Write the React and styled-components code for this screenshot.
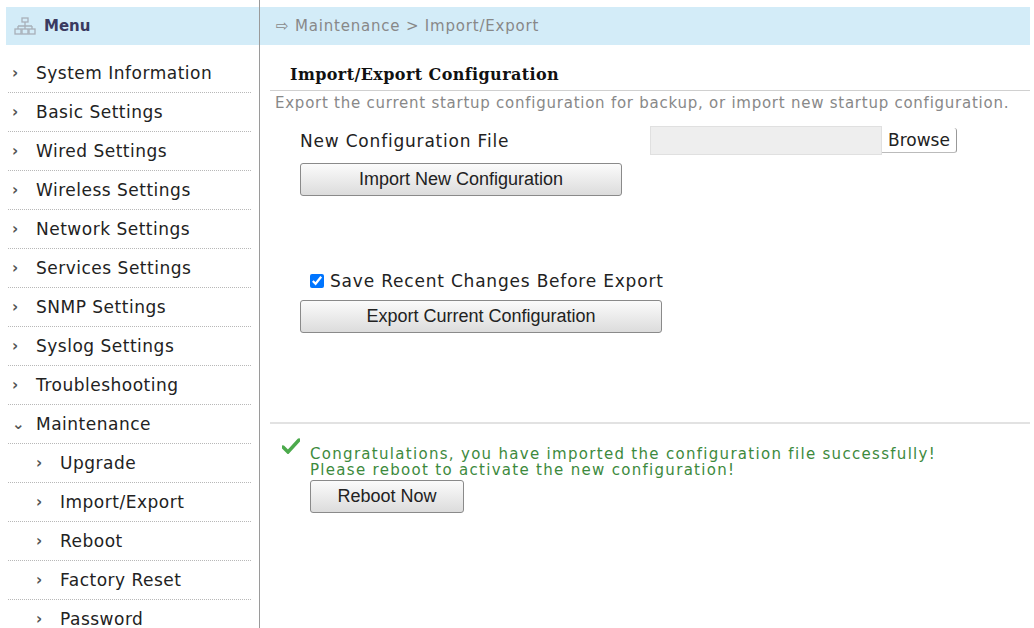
import React from 'react';
import styled, { createGlobalStyle } from 'styled-components';

const Global = createGlobalStyle`
  body { margin: 0; background: #fff; font-family: "DejaVu Sans", Verdana, sans-serif; }
`;

const Page = styled.div`
  display: flex;
  width: 1034px;
  height: 628px;
  overflow: hidden;
  padding-top: 7px;
  box-sizing: border-box;
`;

const Side = styled.div`
  width: 253px;
  margin-left: 6px;
  border-right: 1px solid #9a9a9a;
  margin-top: -7px;
  padding-top: 7px;
`;

const Bar = styled.div`
  height: 38px;
  background: #d3ecf8;
  display: flex;
  align-items: center;
  gap: 8px;
  padding-left: ${(p) => p.$pad || 8}px;
  font-size: 15px;
  letter-spacing: ${(p) => p.$ls || 0}px;
  color: ${(p) => p.$color || '#333'};
`;

const MenuLabel = styled.span`
  font-weight: bold;
  color: #3a3a60;
  font-size: 15px;
`;

const List = styled.div`
  padding-top: 9px;
`;

const Item = styled.div`
  height: 38px;
  margin: 0 8px 0 2px;
  border-bottom: 1px dotted #b8b8b8;
  display: flex;
  align-items: center;
  padding-left: ${(p) => (p.$sub ? 28 : 4)}px;
  font-size: 17px;
  letter-spacing: 0.5px;
  color: #222;
  gap: 14px;
`;

const Chev = styled.span`
  color: #555;
  font-size: 15px;
  font-weight: bold;
  width: 10px;
`;

const Main = styled.div`
  flex: 1;
  margin-right: 4px;
`;

const Content = styled.div`
  padding: 20px 0 0 10px;
`;

const Title = styled.div`
  font-family: "DejaVu Serif", serif;
  font-weight: bold;
  font-size: 16px;
  letter-spacing: 0.4px;
  color: #111;
  padding-left: 20px;
  padding-bottom: 6px;
  border-bottom: 1px solid #d0d0d0;
`;

const Desc = styled.div`
  font-size: 15px;
  letter-spacing: 0.75px;
  color: #888;
  padding: 3px 0 0 5px;
  white-space: nowrap;
`;

const Form = styled.div`
  padding-left: 30px;
`;

const Row = styled.div`
  display: flex;
  align-items: center;
  margin-top: ${(p) => p.$top || 0}px;
  font-size: 17px;
  letter-spacing: 0.8px;
  color: #222;
`;

const FileLabel = styled.span`
  width: 350px;
`;

const FileBox = styled.div`
  width: 230px;
  height: 27px;
  background: #eee;
  border: 1px solid #e0e0e0;
`;

const Browse = styled.div`
  font-size: 17px;
  letter-spacing: 0;
  padding: 2px 6px;
  border-right: 1px solid #999;
  border-bottom: 1px solid #bbb;
  border-radius: 0 3px 3px 0;
`;

const Btn = styled.button`
  width: ${(p) => p.$w}px;
  height: 33px;
  font-family: "Liberation Sans", Arial, sans-serif;
  font-size: 18px;
  color: #222;
  background: linear-gradient(#fbfbfb, #dcdcdc);
  border: 1px solid #8a8a8a;
  border-radius: 3px;
  margin-top: ${(p) => p.$top || 0}px;
`;

const Check = styled.input`
  margin: 0 6px 0 10px;
  width: 14px;
  height: 14px;
`;

const Result = styled.div`
  margin-top: 89px;
  border-top: 2px solid #e2e2e2;
  padding: 14px 0 0 12px;
  display: flex;
  gap: 10px;
`;

const Msg = styled.div`
  color: #3d8a3d;
  font-size: 15px;
  letter-spacing: 1.3px;
  line-height: 16px;
  padding-top: 8px;
`;

const top = [
  'System Information', 'Basic Settings', 'Wired Settings', 'Wireless Settings',
  'Network Settings', 'Services Settings', 'SNMP Settings', 'Syslog Settings', 'Troubleshooting',
];
const sub = ['Upgrade', 'Import/Export', 'Reboot', 'Factory Reset', 'Password'];

export default function App() {
  return (
    <Page>
      <Global />
      <Side>
        <Bar>
          <svg width="22" height="18" viewBox="0 0 22 18">
            <g fill="none" stroke="#a8b0b8" strokeWidth="1.3">
              <rect x="8" y="1" width="6" height="4" />
              <path d="M11 5v4M4 9h14M4 9v3M11 9v3M18 9v3" />
              <rect x="1" y="12" width="6" height="5" />
              <rect x="8" y="12" width="6" height="5" />
              <rect x="15" y="12" width="6" height="5" />
            </g>
          </svg>
          <MenuLabel>Menu</MenuLabel>
        </Bar>
        <List>
          {top.map((t) => (
            <Item key={t}><Chev>›</Chev>{t}</Item>
          ))}
          <Item><Chev>⌄</Chev>Maintenance</Item>
          {sub.map((t) => (
            <Item key={t} $sub><Chev>›</Chev>{t}</Item>
          ))}
        </List>
      </Side>
      <Main>
        <Bar $pad={16} $color="#888" $ls={0.8}>⇨ Maintenance &gt; Import/Export</Bar>
        <Content>
          <Title>Import/Export Configuration</Title>
          <Desc>Export the current startup configuration for backup, or import new startup configuration.</Desc>
          <Form>
            <Row $top={14}>
              <FileLabel>New Configuration File</FileLabel>
              <FileBox />
              <Browse>Browse</Browse>
            </Row>
            <Row $top={8}><Btn $w={322}>Import New Configuration</Btn></Row>
            <Row $top={75}>
              <Check type="checkbox" defaultChecked />
              Save Recent Changes Before Export
            </Row>
            <Row $top={9}><Btn $w={362}>Export Current Configuration</Btn></Row>
          </Form>
          <Result>
            <svg width="18" height="16" viewBox="0 0 18 16">
              <path d="M1 9l5 5L17 2" fill="none" stroke="#4caa4c" strokeWidth="3.5" strokeLinecap="round" />
            </svg>
            <div>
              <Msg>
                Congratulations, you have imported the configuration file successfully!<br />
                Please reboot to activate the new configuration!
              </Msg>
              <Btn $w={154} $top={2}>Reboot Now</Btn>
            </div>
          </Result>
        </Content>
      </Main>
    </Page>
  );
}
